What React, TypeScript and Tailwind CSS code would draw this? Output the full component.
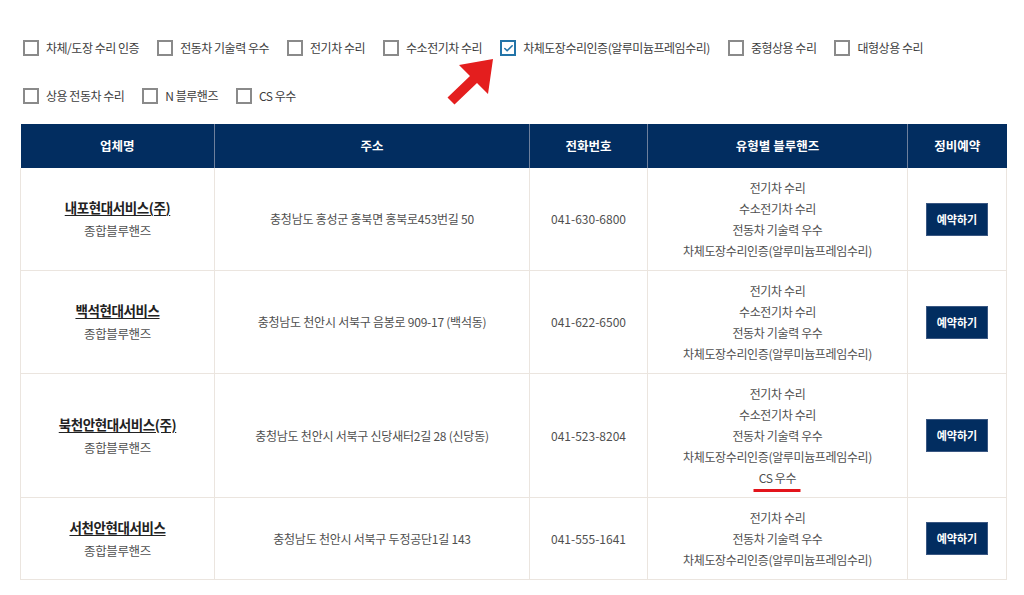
import { Check } from 'lucide-react';

const font = { fontFamily: '"Noto Sans CJK KR", "Noto Sans", sans-serif' };

const filterRow1 = [
  { label: '차체/도장 수리 인증' },
  { label: '전동차 기술력 우수' },
  { label: '전기차 수리' },
  { label: '수소전기차 수리' },
  { label: '차체도장수리인증(알루미늄프레임수리)', checked: true },
  { label: '중형상용 수리' },
  { label: '대형상용 수리' },
];

const filterRow2 = [{ label: '상용 전동차 수리' }, { label: 'N 블루핸즈' }, { label: 'CS 우수' }];

const shops = [
  {
    name: '내포현대서비스(주)',
    address: '충청남도 홍성군 홍북면 홍북로453번길 50',
    phone: '041-630-6800',
    types: ['전기차 수리', '수소전기차 수리', '전동차 기술력 우수', '차체도장수리인증(알루미늄프레임수리)'],
  },
  {
    name: '백석현대서비스',
    address: '충청남도 천안시 서북구 음봉로 909-17 (백석동)',
    phone: '041-622-6500',
    types: ['전기차 수리', '수소전기차 수리', '전동차 기술력 우수', '차체도장수리인증(알루미늄프레임수리)'],
  },
  {
    name: '북천안현대서비스(주)',
    address: '충청남도 천안시 서북구 신당새터2길 28 (신당동)',
    phone: '041-523-8204',
    types: ['전기차 수리', '수소전기차 수리', '전동차 기술력 우수', '차체도장수리인증(알루미늄프레임수리)', 'CS 우수'],
  },
  {
    name: '서천안현대서비스',
    address: '충청남도 천안시 서북구 두정공단1길 143',
    phone: '041-555-1641',
    types: ['전기차 수리', '전동차 기술력 우수', '차체도장수리인증(알루미늄프레임수리)'],
  },
];

const FilterItem = ({ label, checked }: { label: string; checked?: boolean }) => (
  <label className="flex items-center mr-[18px]">
    {checked ? (
      <span className="w-4 h-4 border-2 border-[#2374a8] bg-white flex items-center justify-center">
        <Check size={11} strokeWidth={3.5} className="text-[#2374a8]" />
      </span>
    ) : (
      <span className="w-4 h-4 border-2 border-[#8a8a8a] bg-white"></span>
    )}
    <span className="ml-[7px] text-[12px] tracking-[-0.04em] text-[#3d3d3d]">{label}</span>
  </label>
);

const App = () => {
  return (
    <div className="relative w-[1024px] h-[595px] bg-white overflow-hidden" style={font}>
      <div className="pt-10 pl-[23px]">
        <div className="flex items-center h-4">
          {filterRow1.map((f) => (
            <FilterItem key={f.label} label={f.label} checked={f.checked} />
          ))}
        </div>
        <div className="flex items-center h-4 mt-8">
          {filterRow2.map((f) => (
            <FilterItem key={f.label} label={f.label} />
          ))}
        </div>
      </div>

      {/* red pointer arrow */}
      <svg className="absolute left-[440px] top-[50px]" width="60" height="60" viewBox="0 0 60 60">
        <polygon points="53,9 48,44 37,33 14.5,54.5 7.5,47.5 30,26 19,15" fill="#e41e1e" />
      </svg>

      <div className="mt-[20px] ml-5 w-[986px]">
        <table className="w-full border-collapse text-center table-fixed">
          <colgroup>
            <col className="w-[194px]" />
            <col className="w-[315px]" />
            <col className="w-[118px]" />
            <col className="w-[260px]" />
            <col className="w-[99px]" />
          </colgroup>
          <thead>
            <tr className="bg-[#022d60] text-white text-[12.5px] font-bold h-[44px]">
              {['업체명', '주소', '전화번호', '유형별 블루핸즈', '정비예약'].map((h, i) => (
                <th key={h} className={`font-bold ${i > 0 ? 'border-l border-[#6d7f9c]' : ''}`}>
                  {h}
                </th>
              ))}
            </tr>
          </thead>
          <tbody className="text-[12px] text-[#4f4f4f]">
            {shops.map((s) => (
              <tr key={s.name} className="border-b border-[#ebe5df]">
                <td className="border-l border-r border-[#ebe5df] leading-[24px]">
                  <div className="font-bold text-[#222] underline underline-offset-2 text-[13.5px] tracking-[-0.03em]">
                    {s.name}
                  </div>
                  <div className="text-[12.5px] tracking-[-0.03em]">종합블루핸즈</div>
                </td>
                <td className="border-r border-[#ebe5df] tracking-[-0.02em]">{s.address}</td>
                <td className="border-r border-[#ebe5df]">{s.phone}</td>
                <td className="border-r border-[#ebe5df] py-[9px] leading-[21px] tracking-[-0.03em]">
                  {s.types.map((t) =>
                    t === 'CS 우수' ? (
                      <div key={t}>
                        <span className="relative inline-block">
                          {t}
                          <span className="absolute left-1/2 -translate-x-1/2 top-full mt-[1px] w-[47px] h-[3px] bg-[#e3141b]"></span>
                        </span>
                      </div>
                    ) : (
                      <div key={t}>{t}</div>
                    )
                  )}
                </td>
                <td className="border-r border-[#ebe5df]">
                  <button className="w-[62px] h-[33px] bg-[#022d60] border border-[#3a5782] text-white text-[11px] font-bold">
                    예약하기
                  </button>
                </td>
              </tr>
            ))}
          </tbody>
        </table>
      </div>
    </div>
  );
};

export default App;
